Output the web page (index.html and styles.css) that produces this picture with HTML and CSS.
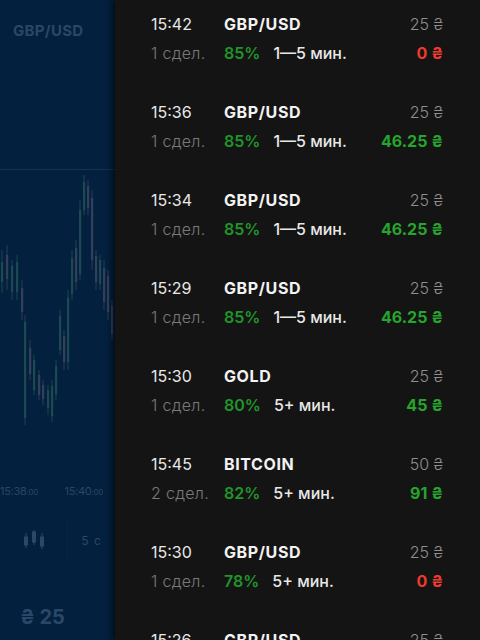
FILE: index.html
```html
<!DOCTYPE html>
<html lang="ru">

<head>
    <meta charset="UTF-8">
    <meta name="viewport" content="width=device-width, initial-scale=1.0">
    <title>Сделки</title>
    <link rel="stylesheet" href="styles.css">
</head>

<body>
    <div class="screen">
        <!-- chart behind the drawer -->
        <div class="chart-side">
            <div class="asset">GBP/USD</div>
            <div class="chart">
                <svg width="115" height="270" viewBox="0 170 115 270">
                    <g stroke-width="0.9">
                        <line x1="2" y1="250" x2="2" y2="293" stroke="#1d4a50"/><rect x="1" y="262" width="2.2" height="20" fill="#1d4a50"/>
                        <line x1="7" y1="245" x2="7" y2="290" stroke="#34405a"/><rect x="6" y="255" width="2.2" height="24" fill="#34405a"/>
                        <line x1="12" y1="260" x2="12" y2="300" stroke="#1d4a50"/><rect x="11" y="266" width="2.2" height="26" fill="#1d4a50"/>
                        <line x1="17" y1="255" x2="17" y2="300" stroke="#1d4a50"/><rect x="16" y="262" width="2.2" height="30" fill="#1d4a50"/>
                        <line x1="22" y1="280" x2="22" y2="320" stroke="#34405a"/><rect x="21" y="288" width="2.2" height="24" fill="#34405a"/>
                        <line x1="25" y1="315" x2="25" y2="425" stroke="#1d4a50"/><rect x="24" y="322" width="2.2" height="96" fill="#1d4a50"/>
                        <line x1="30" y1="340" x2="30" y2="380" stroke="#34405a"/><rect x="29" y="348" width="2.2" height="26" fill="#34405a"/>
                        <line x1="34" y1="355" x2="34" y2="395" stroke="#1d4a50"/><rect x="33" y="360" width="2.2" height="30" fill="#1d4a50"/>
                        <line x1="39" y1="370" x2="39" y2="400" stroke="#34405a"/><rect x="38" y="375" width="2.2" height="20" fill="#34405a"/>
                        <line x1="43" y1="380" x2="43" y2="405" stroke="#34405a"/><rect x="42" y="385" width="2.2" height="14" fill="#34405a"/>
                        <line x1="48" y1="385" x2="48" y2="415" stroke="#1d4a50"/><rect x="47" y="390" width="2.2" height="18" fill="#1d4a50"/>
                        <line x1="52" y1="380" x2="52" y2="422" stroke="#1d4a50"/><rect x="51" y="386" width="2.2" height="30" fill="#1d4a50"/>
                        <line x1="56" y1="360" x2="56" y2="400" stroke="#1d4a50"/><rect x="55" y="366" width="2.2" height="28" fill="#1d4a50"/>
                        <line x1="60" y1="310" x2="60" y2="355" stroke="#1d4a50"/><rect x="59" y="316" width="2.2" height="34" fill="#1d4a50"/>
                        <line x1="64" y1="330" x2="64" y2="370" stroke="#34405a"/><rect x="63" y="336" width="2.2" height="26" fill="#34405a"/>
                        <line x1="68" y1="290" x2="68" y2="370" stroke="#1d4a50"/><rect x="67" y="298" width="2.2" height="64" fill="#1d4a50"/>
                        <line x1="72" y1="250" x2="72" y2="300" stroke="#1d4a50"/><rect x="71" y="258" width="2.2" height="36" fill="#1d4a50"/>
                        <line x1="76" y1="240" x2="76" y2="290" stroke="#34405a"/><rect x="75" y="248" width="2.2" height="34" fill="#34405a"/>
                        <line x1="80" y1="200" x2="80" y2="280" stroke="#1d4a50"/><rect x="79" y="210" width="2.2" height="64" fill="#1d4a50"/>
                        <line x1="84" y1="175" x2="84" y2="215" stroke="#1d4a50"/><rect x="83" y="182" width="2.2" height="28" fill="#1d4a50"/>
                        <line x1="88" y1="180" x2="88" y2="215" stroke="#34405a"/><rect x="87" y="186" width="2.2" height="22" fill="#34405a"/>
                        <line x1="92" y1="190" x2="92" y2="270" stroke="#34405a"/><rect x="91" y="198" width="2.2" height="62" fill="#34405a"/>
                        <line x1="96" y1="250" x2="96" y2="290" stroke="#34405a"/><rect x="95" y="256" width="2.2" height="26" fill="#34405a"/>
                        <line x1="100" y1="255" x2="100" y2="290" stroke="#1d4a50"/><rect x="99" y="260" width="2.2" height="24" fill="#1d4a50"/>
                        <line x1="104" y1="260" x2="104" y2="310" stroke="#34405a"/><rect x="103" y="268" width="2.2" height="34" fill="#34405a"/>
                        <line x1="108" y1="270" x2="108" y2="320" stroke="#34405a"/><rect x="107" y="276" width="2.2" height="36" fill="#34405a"/>
                        <line x1="112" y1="300" x2="112" y2="340" stroke="#34405a"/><rect x="111" y="306" width="2.2" height="28" fill="#34405a"/>
                    </g>
                </svg>
            </div>
            <div class="axis">
                <span>15:38<small>:00</small></span>
                <span>15:40<small>:00</small></span>
            </div>
            <div class="tools">
                <div class="tool">
                    <svg width="24" height="24" viewBox="0 0 24 24" fill="#2c4868" stroke="#2c4868" stroke-width="1">
                        <line x1="4" y1="5" x2="4" y2="20"/><rect x="2.5" y="9" width="3" height="8"/>
                        <line x1="12" y1="2" x2="12" y2="17"/><rect x="10.5" y="4" width="3" height="10"/>
                        <line x1="20" y1="5" x2="20" y2="21"/><rect x="18.5" y="9" width="3" height="9"/>
                    </svg>
                </div>
                <div class="tool tool-text">5 с</div>
            </div>
            <div class="stake">₴ 25</div>
        </div>

        <!-- trades drawer -->
        <div class="trades">
            <div class="trade">
                <span class="time">15:42</span>
                <span class="symbol">GBP/USD</span>
                <span class="amount">25 ₴</span>
                <span class="count">1 сдел.</span>
                <span class="info"><b class="rate">85%</b>1—5 мин.</span>
                <span class="result loss">0 ₴</span>
            </div>
            <div class="trade">
                <span class="time">15:36</span>
                <span class="symbol">GBP/USD</span>
                <span class="amount">25 ₴</span>
                <span class="count">1 сдел.</span>
                <span class="info"><b class="rate">85%</b>1—5 мин.</span>
                <span class="result win">46.25 ₴</span>
            </div>
            <div class="trade">
                <span class="time">15:34</span>
                <span class="symbol">GBP/USD</span>
                <span class="amount">25 ₴</span>
                <span class="count">1 сдел.</span>
                <span class="info"><b class="rate">85%</b>1—5 мин.</span>
                <span class="result win">46.25 ₴</span>
            </div>
            <div class="trade">
                <span class="time">15:29</span>
                <span class="symbol">GBP/USD</span>
                <span class="amount">25 ₴</span>
                <span class="count">1 сдел.</span>
                <span class="info"><b class="rate">85%</b>1—5 мин.</span>
                <span class="result win">46.25 ₴</span>
            </div>
            <div class="trade">
                <span class="time">15:30</span>
                <span class="symbol">GOLD</span>
                <span class="amount">25 ₴</span>
                <span class="count">1 сдел.</span>
                <span class="info"><b class="rate">80%</b>5+ мин.</span>
                <span class="result win">45 ₴</span>
            </div>
            <div class="trade">
                <span class="time">15:45</span>
                <span class="symbol">BITCOIN</span>
                <span class="amount">50 ₴</span>
                <span class="count">2 сдел.</span>
                <span class="info"><b class="rate">82%</b>5+ мин.</span>
                <span class="result win">91 ₴</span>
            </div>
            <div class="trade">
                <span class="time">15:30</span>
                <span class="symbol">GBP/USD</span>
                <span class="amount">25 ₴</span>
                <span class="count">1 сдел.</span>
                <span class="info"><b class="rate">78%</b>5+ мин.</span>
                <span class="result loss">0 ₴</span>
            </div>
            <div class="trade">
                <span class="time">15:26</span>
                <span class="symbol">GBP/USD</span>
                <span class="amount">25 ₴</span>
                <span class="count">1 сдел.</span>
                <span class="info"><b class="rate">85%</b>1—5 мин.</span>
                <span class="result win">46.25 ₴</span>
            </div>
        </div>
    </div>
</body>

</html>
```

FILE: styles.css
```css
body {
    margin: 0;
    font-family: Inter, "Noto Sans", "DejaVu Sans", sans-serif;
    background: #141414;
}

.screen {
    display: flex;
    width: 480px;
    height: 640px;
    overflow: hidden;
}

/* left: dimmed chart */
.chart-side {
    width: 115px;
    flex-shrink: 0;
    display: flex;
    flex-direction: column;
    background: #03203e;
    color: #2b4767;
}

.asset {
    margin: 21px 0 0 13px;
    height: 20px;
    line-height: 20px;
    font-size: 15px;
    font-weight: 700;
    letter-spacing: 0.3px;
}

.chart {
    margin-top: 128px;
    height: 270px;
    border-top: 1px solid #12345a;
}

.chart svg {
    display: block;
}

.axis {
    display: flex;
    justify-content: space-between;
    padding: 0 12px 0 0;
    margin-top: 42px;
    height: 18px;
    line-height: 18px;
    font-size: 11px;
    letter-spacing: -0.3px;
}

.axis small {
    font-size: 8px;
}

.tools {
    display: flex;
    margin-top: 18px;
    height: 44px;
}

.tool {
    display: flex;
    align-items: center;
    justify-content: center;
    width: 67px;
    border-right: 1px solid rgba(255, 255, 255, 0.025);
}

.tool-text {
    width: 47px;
    border-right: 0;
    font-size: 12px;
    letter-spacing: 1px;
}

.stake {
    margin: 42px 0 0 20px;
    font-size: 20px;
    font-weight: 700;
    line-height: 26px;
}

/* right: trades list */
.trades {
    flex: 1;
    background: #141414;
    box-shadow: -3px 0 6px rgba(0, 0, 0, 0.6);
    position: relative;
}

.trade {
    display: grid;
    grid-template-columns: 73px 1fr auto;
    grid-template-rows: 24px 24px;
    row-gap: 5px;
    height: 88px;
    box-sizing: border-box;
    padding: 12px 37px 0 36px;
    font-size: 16px;
    line-height: 24px;
    white-space: nowrap;
}

.time {
    color: #e8e8e8;
}

.symbol {
    color: #f2f2f2;
    font-weight: 700;
    letter-spacing: 0.6px;
}

.amount {
    color: #8e8e8e;
    font-weight: 300;
    text-align: right;
}

.count {
    color: #7a7a7a;
    font-weight: 300;
    letter-spacing: 0.3px;
}

.info {
    color: #e8e8e8;
    font-weight: 500;
}

.rate {
    color: #20952a;
    font-weight: 600;
    margin-right: 13px;
}

.result {
    text-align: right;
    font-weight: 700;
}

.win {
    color: #26a52c;
}

.loss {
    color: #ef3a30;
}
```
